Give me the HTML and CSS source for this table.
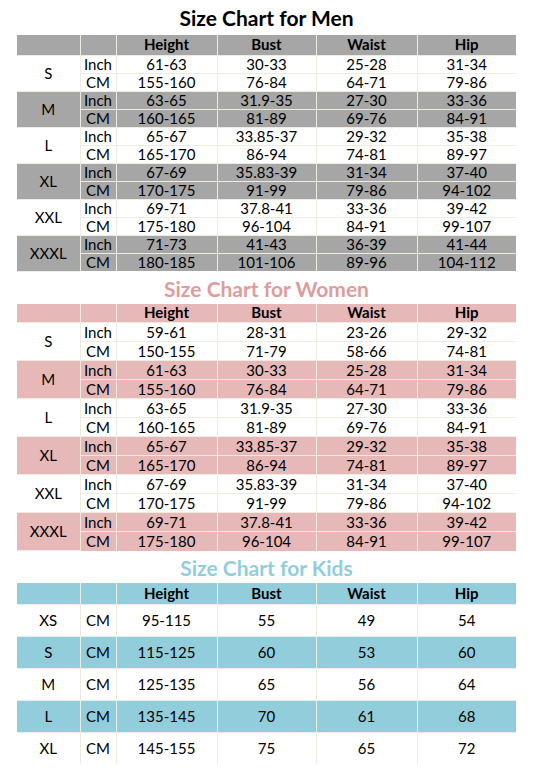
FILE: index.html
```html
<!DOCTYPE html>
<html>
	<head>
		<meta charset="utf-8" />
		<title>Size Chart</title>
		<link rel="stylesheet" href="styles.css">
	</head>
	<body>
		<div class="chart">
			<!-- men -->
			<div class="title title-men">Size Chart for Men</div>
			<table class="sizes men">
				<colgroup>
					<col class="c-size"><col class="c-unit"><col class="c-wide"><col class="c-narrow"><col class="c-wide"><col class="c-narrow">
				</colgroup>
				<tr class="head"><th></th><th></th><th>Height</th><th>Bust</th><th>Waist</th><th>Hip</th></tr>
				<tr><td rowspan="2">S</td><td>Inch</td><td>61-63</td><td>30-33</td><td>25-28</td><td>31-34</td></tr>
				<tr><td>CM</td><td>155-160</td><td>76-84</td><td>64-71</td><td>79-86</td></tr>
				<tr class="fill"><td rowspan="2">M</td><td>Inch</td><td>63-65</td><td>31.9-35</td><td>27-30</td><td>33-36</td></tr>
				<tr class="fill"><td>CM</td><td>160-165</td><td>81-89</td><td>69-76</td><td>84-91</td></tr>
				<tr><td rowspan="2">L</td><td>Inch</td><td>65-67</td><td>33.85-37</td><td>29-32</td><td>35-38</td></tr>
				<tr><td>CM</td><td>165-170</td><td>86-94</td><td>74-81</td><td>89-97</td></tr>
				<tr class="fill"><td rowspan="2">XL</td><td>Inch</td><td>67-69</td><td>35.83-39</td><td>31-34</td><td>37-40</td></tr>
				<tr class="fill"><td>CM</td><td>170-175</td><td>91-99</td><td>79-86</td><td>94-102</td></tr>
				<tr><td rowspan="2">XXL</td><td>Inch</td><td>69-71</td><td>37.8-41</td><td>33-36</td><td>39-42</td></tr>
				<tr><td>CM</td><td>175-180</td><td>96-104</td><td>84-91</td><td>99-107</td></tr>
				<tr class="fill"><td rowspan="2">XXXL</td><td>Inch</td><td>71-73</td><td>41-43</td><td>36-39</td><td>41-44</td></tr>
				<tr class="fill"><td>CM</td><td>180-185</td><td>101-106</td><td>89-96</td><td>104-112</td></tr>
			</table>

			<!-- women -->
			<div class="title title-women">Size Chart for Women</div>
			<table class="sizes women">
				<colgroup>
					<col class="c-size"><col class="c-unit"><col class="c-wide"><col class="c-narrow"><col class="c-wide"><col class="c-narrow">
				</colgroup>
				<tr class="head"><th></th><th></th><th>Height</th><th>Bust</th><th>Waist</th><th>Hip</th></tr>
				<tr><td rowspan="2">S</td><td>Inch</td><td>59-61</td><td>28-31</td><td>23-26</td><td>29-32</td></tr>
				<tr><td>CM</td><td>150-155</td><td>71-79</td><td>58-66</td><td>74-81</td></tr>
				<tr class="fill"><td rowspan="2">M</td><td>Inch</td><td>61-63</td><td>30-33</td><td>25-28</td><td>31-34</td></tr>
				<tr class="fill"><td>CM</td><td>155-160</td><td>76-84</td><td>64-71</td><td>79-86</td></tr>
				<tr><td rowspan="2">L</td><td>Inch</td><td>63-65</td><td>31.9-35</td><td>27-30</td><td>33-36</td></tr>
				<tr><td>CM</td><td>160-165</td><td>81-89</td><td>69-76</td><td>84-91</td></tr>
				<tr class="fill"><td rowspan="2">XL</td><td>Inch</td><td>65-67</td><td>33.85-37</td><td>29-32</td><td>35-38</td></tr>
				<tr class="fill"><td>CM</td><td>165-170</td><td>86-94</td><td>74-81</td><td>89-97</td></tr>
				<tr><td rowspan="2">XXL</td><td>Inch</td><td>67-69</td><td>35.83-39</td><td>31-34</td><td>37-40</td></tr>
				<tr><td>CM</td><td>170-175</td><td>91-99</td><td>79-86</td><td>94-102</td></tr>
				<tr class="fill"><td rowspan="2">XXXL</td><td>Inch</td><td>69-71</td><td>37.8-41</td><td>33-36</td><td>39-42</td></tr>
				<tr class="fill"><td>CM</td><td>175-180</td><td>96-104</td><td>84-91</td><td>99-107</td></tr>
			</table>

			<!-- kids -->
			<div class="title title-kids">Size Chart for Kids</div>
			<table class="sizes kids">
				<colgroup>
					<col class="c-size"><col class="c-unit"><col class="c-wide"><col class="c-narrow"><col class="c-wide"><col class="c-narrow">
				</colgroup>
				<tr class="head"><th></th><th></th><th>Height</th><th>Bust</th><th>Waist</th><th>Hip</th></tr>
				<tr><td>XS</td><td>CM</td><td>95-115</td><td>55</td><td>49</td><td>54</td></tr>
				<tr class="fill"><td>S</td><td>CM</td><td>115-125</td><td>60</td><td>53</td><td>60</td></tr>
				<tr><td>M</td><td>CM</td><td>125-135</td><td>65</td><td>56</td><td>64</td></tr>
				<tr class="fill"><td>L</td><td>CM</td><td>135-145</td><td>70</td><td>61</td><td>68</td></tr>
				<tr><td>XL</td><td>CM</td><td>145-155</td><td>75</td><td>65</td><td>72</td></tr>
			</table>
		</div>
	</body>
</html>
```

FILE: styles.css
```css
html,
body {
	margin: 0;
	padding: 0;
	background: #fff;
	font-family: Lato, "Open Sans", "Liberation Sans", sans-serif;
	color: #000;
}
.chart
{
	width: 499px;
	padding: 0 20px 0 17px;
}
.title
{
	height: 32px;
	line-height: 34px;
	text-align: center;
	font-size: 21px;
	font-weight: bold;
}
.title-men
{
	height: 35px;
	line-height: 35px;
	color: #000;
}
.title-women
{
	color: #e09c9c;
}
.title-kids
{
	color: #92cddc;
}
.sizes
{
	width: 499px;
	table-layout: fixed;
	border-collapse: collapse;
	font-size: 15px;
}
.c-size { width: 63px; }
.c-unit { width: 36px; }
.c-wide { width: 101px; }
.c-narrow { width: 99px; }
.sizes tr
{
	height: 18px;
}
.sizes th,
.sizes td
{
	padding: 0;
	border: 1px solid #eeece1;
	text-align: center;
	line-height: 17px;
	white-space: nowrap;
}
.sizes th
{
	font-weight: bold;
}
.sizes tr:first-child th
{
	border-top: none;
}
.sizes tr:last-child td
{
	border-bottom: none;
}
.sizes th:first-child,
.sizes td:first-child
{
	border-left: none;
}
.sizes th:last-child,
.sizes td:last-child
{
	border-right: none;
}
/* men */
.men tr.head
{
	height: 20px;
}
.men .head,
.men .fill
{
	background: #a6a6a6;
}
/* women */
.women tr
{
	height: 19px;
}
.women .head,
.women .fill
{
	background: #e6b8b7;
}
/* kids */
.kids tr
{
	height: 32px;
}
.kids tr.head
{
	height: 21px;
}
.kids .head,
.kids .fill
{
	background: #92cddc;
}
```
